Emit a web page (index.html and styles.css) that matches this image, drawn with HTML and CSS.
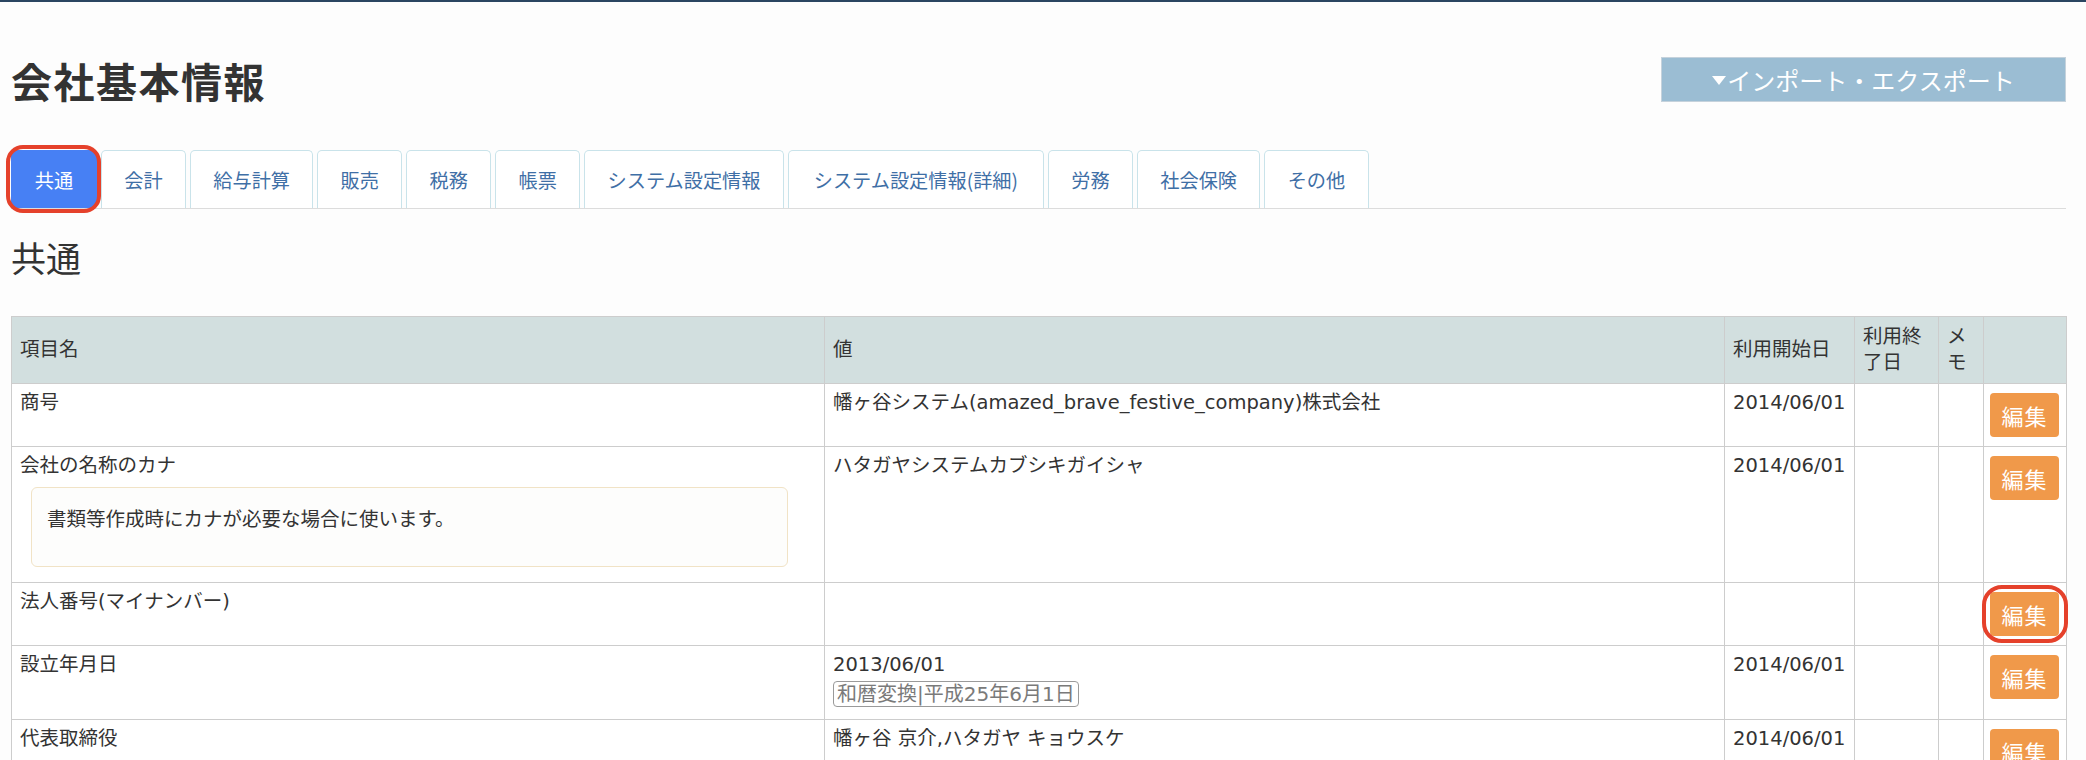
FILE: index.html
```html
<!DOCTYPE html>
<html lang="ja">
<head>
<meta charset="utf-8">
<title>会社基本情報</title>
<link rel="stylesheet" href="styles.css">
</head>
<body>
<div class="page">
  <header class="page-head">
    <h1 class="title">会社基本情報</h1>
    <button class="io-btn" type="button"><span class="tri"></span>インポート・エクスポート</button>
  </header>

  <nav class="tabs">
    <a class="tab active ring">共通</a>
    <a class="tab">会計</a>
    <a class="tab">給与計算</a>
    <a class="tab">販売</a>
    <a class="tab">税務</a>
    <a class="tab">帳票</a>
    <a class="tab">システム設定情報</a>
    <a class="tab tab-paren">システム設定情報(詳細)</a>
    <a class="tab">労務</a>
    <a class="tab">社会保険</a>
    <a class="tab">その他</a>
  </nav>

  <h2 class="section">共通</h2>

  <table class="info">
    <colgroup>
      <col class="c-name">
      <col class="c-value">
      <col class="c-start">
      <col class="c-end">
      <col class="c-memo">
      <col class="c-act">
    </colgroup>
    <thead>
      <tr>
        <th>項目名</th>
        <th>値</th>
        <th>利用開始日</th>
        <th>利用終了日</th>
        <th>メモ</th>
        <th></th>
      </tr>
    </thead>
    <tbody>
      <tr>
        <td>商号</td>
        <td>幡ヶ谷システム(amazed_brave_festive_company)株式会社</td>
        <td>2014/06/01</td>
        <td></td>
        <td></td>
        <td class="act"><button class="edit" type="button">編集</button></td>
      </tr>
      <tr>
        <td>会社の名称のカナ
          <div class="help"><p>書類等作成時にカナが必要な場合に使います。</p></div>
        </td>
        <td>ハタガヤシステムカブシキガイシャ</td>
        <td>2014/06/01</td>
        <td></td>
        <td></td>
        <td class="act"><button class="edit" type="button">編集</button></td>
      </tr>
      <tr>
        <td>法人番号(マイナンバー)</td>
        <td></td>
        <td></td>
        <td></td>
        <td></td>
        <td class="act"><button class="edit ring-btn" type="button">編集</button></td>
      </tr>
      <tr>
        <td>設立年月日</td>
        <td>2013/06/01
          <div class="wareki-wrap"><span class="wareki">和暦変換|平成25年6月1日</span></div>
        </td>
        <td>2014/06/01</td>
        <td></td>
        <td></td>
        <td class="act"><button class="edit" type="button">編集</button></td>
      </tr>
      <tr>
        <td>代表取締役</td>
        <td>幡ヶ谷 京介,ハタガヤ キョウスケ</td>
        <td>2014/06/01</td>
        <td></td>
        <td></td>
        <td class="act"><button class="edit" type="button">編集</button></td>
      </tr>
    </tbody>
  </table>
</div>
</body>
</html>
```

FILE: styles.css
```css
html, body {
  margin: 0;
  padding: 0;
}

body {
  background: #fdfdfd;
  border-top: 2px solid #2b4561;
  color: #333;
  font-family: "DejaVu Sans", "Noto Sans CJK JP", sans-serif;
  font-size: 19.5px;
  overflow: hidden;
}

.page {
  padding: 55px 20px 0 11px;
}

.page-head {
  display: flex;
  justify-content: space-between;
  align-items: flex-start;
  height: 45px;
}

.title {
  margin: 0;
  font-family: "Noto Sans CJK JP", sans-serif;
  font-size: 41px;
  font-weight: 700;
  line-height: 46px;
  color: #333;
  letter-spacing: 1.5px;
}

.io-btn {
  width: 405px;
  height: 45px;
  margin: 0;
  padding: 0;
  background: #9bbdd3;
  border: 1px solid #c5d2dc;
  color: #fff;
  font-family: "Noto Sans CJK JP", sans-serif;
  font-size: 24px;
  line-height: 43px;
  display: flex;
  align-items: center;
  justify-content: center;
}

.tri {
  display: inline-block;
  width: 0;
  height: 0;
  border-left: 7px solid transparent;
  border-right: 7px solid transparent;
  border-top: 9px solid #fff;
  margin-right: 1px;
  margin-top: 2px;
}

.tabs {
  display: flex;
  gap: 4px;
  margin-top: 48px;
  height: 58px;
  border-bottom: 1px solid #dcdcdc;
}

.tab {
  display: flex;
  align-items: center;
  height: 57px;
  padding: 0 22.3px;
  border: 1px solid #c9e3ea;
  border-bottom: none;
  border-radius: 5px 5px 0 0;
  background: #fff;
  color: #3f6fa6;
  font-family: "Noto Sans CJK JP", sans-serif;
  font-size: 19.2px;
  white-space: nowrap;
}

.tab.tab-paren {
  padding: 0 25px;
}

.tab.active {
  background: #4780f4;
  border-color: #4780f4;
  color: #fff;
  border-radius: 5px;
  height: 58px;
  box-sizing: border-box;
  width: 86px;
  justify-content: center;
  padding: 0;
}

.ring {
  position: relative;
}

.ring::after {
  content: "";
  position: absolute;
  top: -6px;
  bottom: -5px;
  left: -6px;
  right: -5px;
  border: 4px solid #e5412b;
  border-radius: 17px;
}

.section {
  margin: 28px 0 39px;
  font-family: "Noto Sans CJK JP", sans-serif;
  font-size: 35px;
  font-weight: 400;
  line-height: 40px;
  color: #333;
}

.info {
  border-collapse: collapse;
  table-layout: fixed;
  width: 2055px;
  background: #fff;
}

.c-name { width: 813px; }
.c-value { width: 900px; }
.c-start { width: 130px; }
.c-end { width: 84px; }
.c-memo { width: 45px; }
.c-act { width: 83px; }

.info th,
.info td {
  border: 1px solid #cdcdcd;
  text-align: left;
  line-height: 26px;
  color: #333;
}

.info th {
  background: #d2dfdf;
  font-weight: 400;
  padding: 7px 8px;
  vertical-align: middle;
}

.info td {
  padding: 6px 8px 9px;
  vertical-align: top;
}

.info td.act {
  padding: 6px 6px 9px 6px;
}

.edit {
  display: block;
  width: 69px;
  height: 44px;
  margin: 3px 0 0 0;
  padding: 0;
  border: none;
  border-radius: 4px;
  background: #f0994a;
  color: #fff;
  font-family: "Noto Sans CJK JP", sans-serif;
  font-size: 22px;
  letter-spacing: 1px;
}

.ring-btn {
  position: relative;
}

.ring-btn::after {
  content: "";
  position: absolute;
  top: -7px;
  bottom: -7px;
  left: -8px;
  right: -9px;
  border: 4px solid #e5412b;
  border-radius: 20px;
}

.help {
  margin: 8px 28px 6px 11px;
  padding: 19px 15px 20px;
  border: 1px solid #f1e3c6;
  border-radius: 6px;
  background: #fdfdfc;
}

.help p {
  margin: 0 0 13px;
}

.wareki-wrap {
  margin: 3px 0 3px;
  line-height: 24px;
}

.wareki {
  display: inline-block;
  padding: 0 3px;
  border: 1px solid #9a9a9a;
  border-radius: 4px;
  color: #7a7a7a;
  font-size: 20px;
  line-height: 24px;
}
```
